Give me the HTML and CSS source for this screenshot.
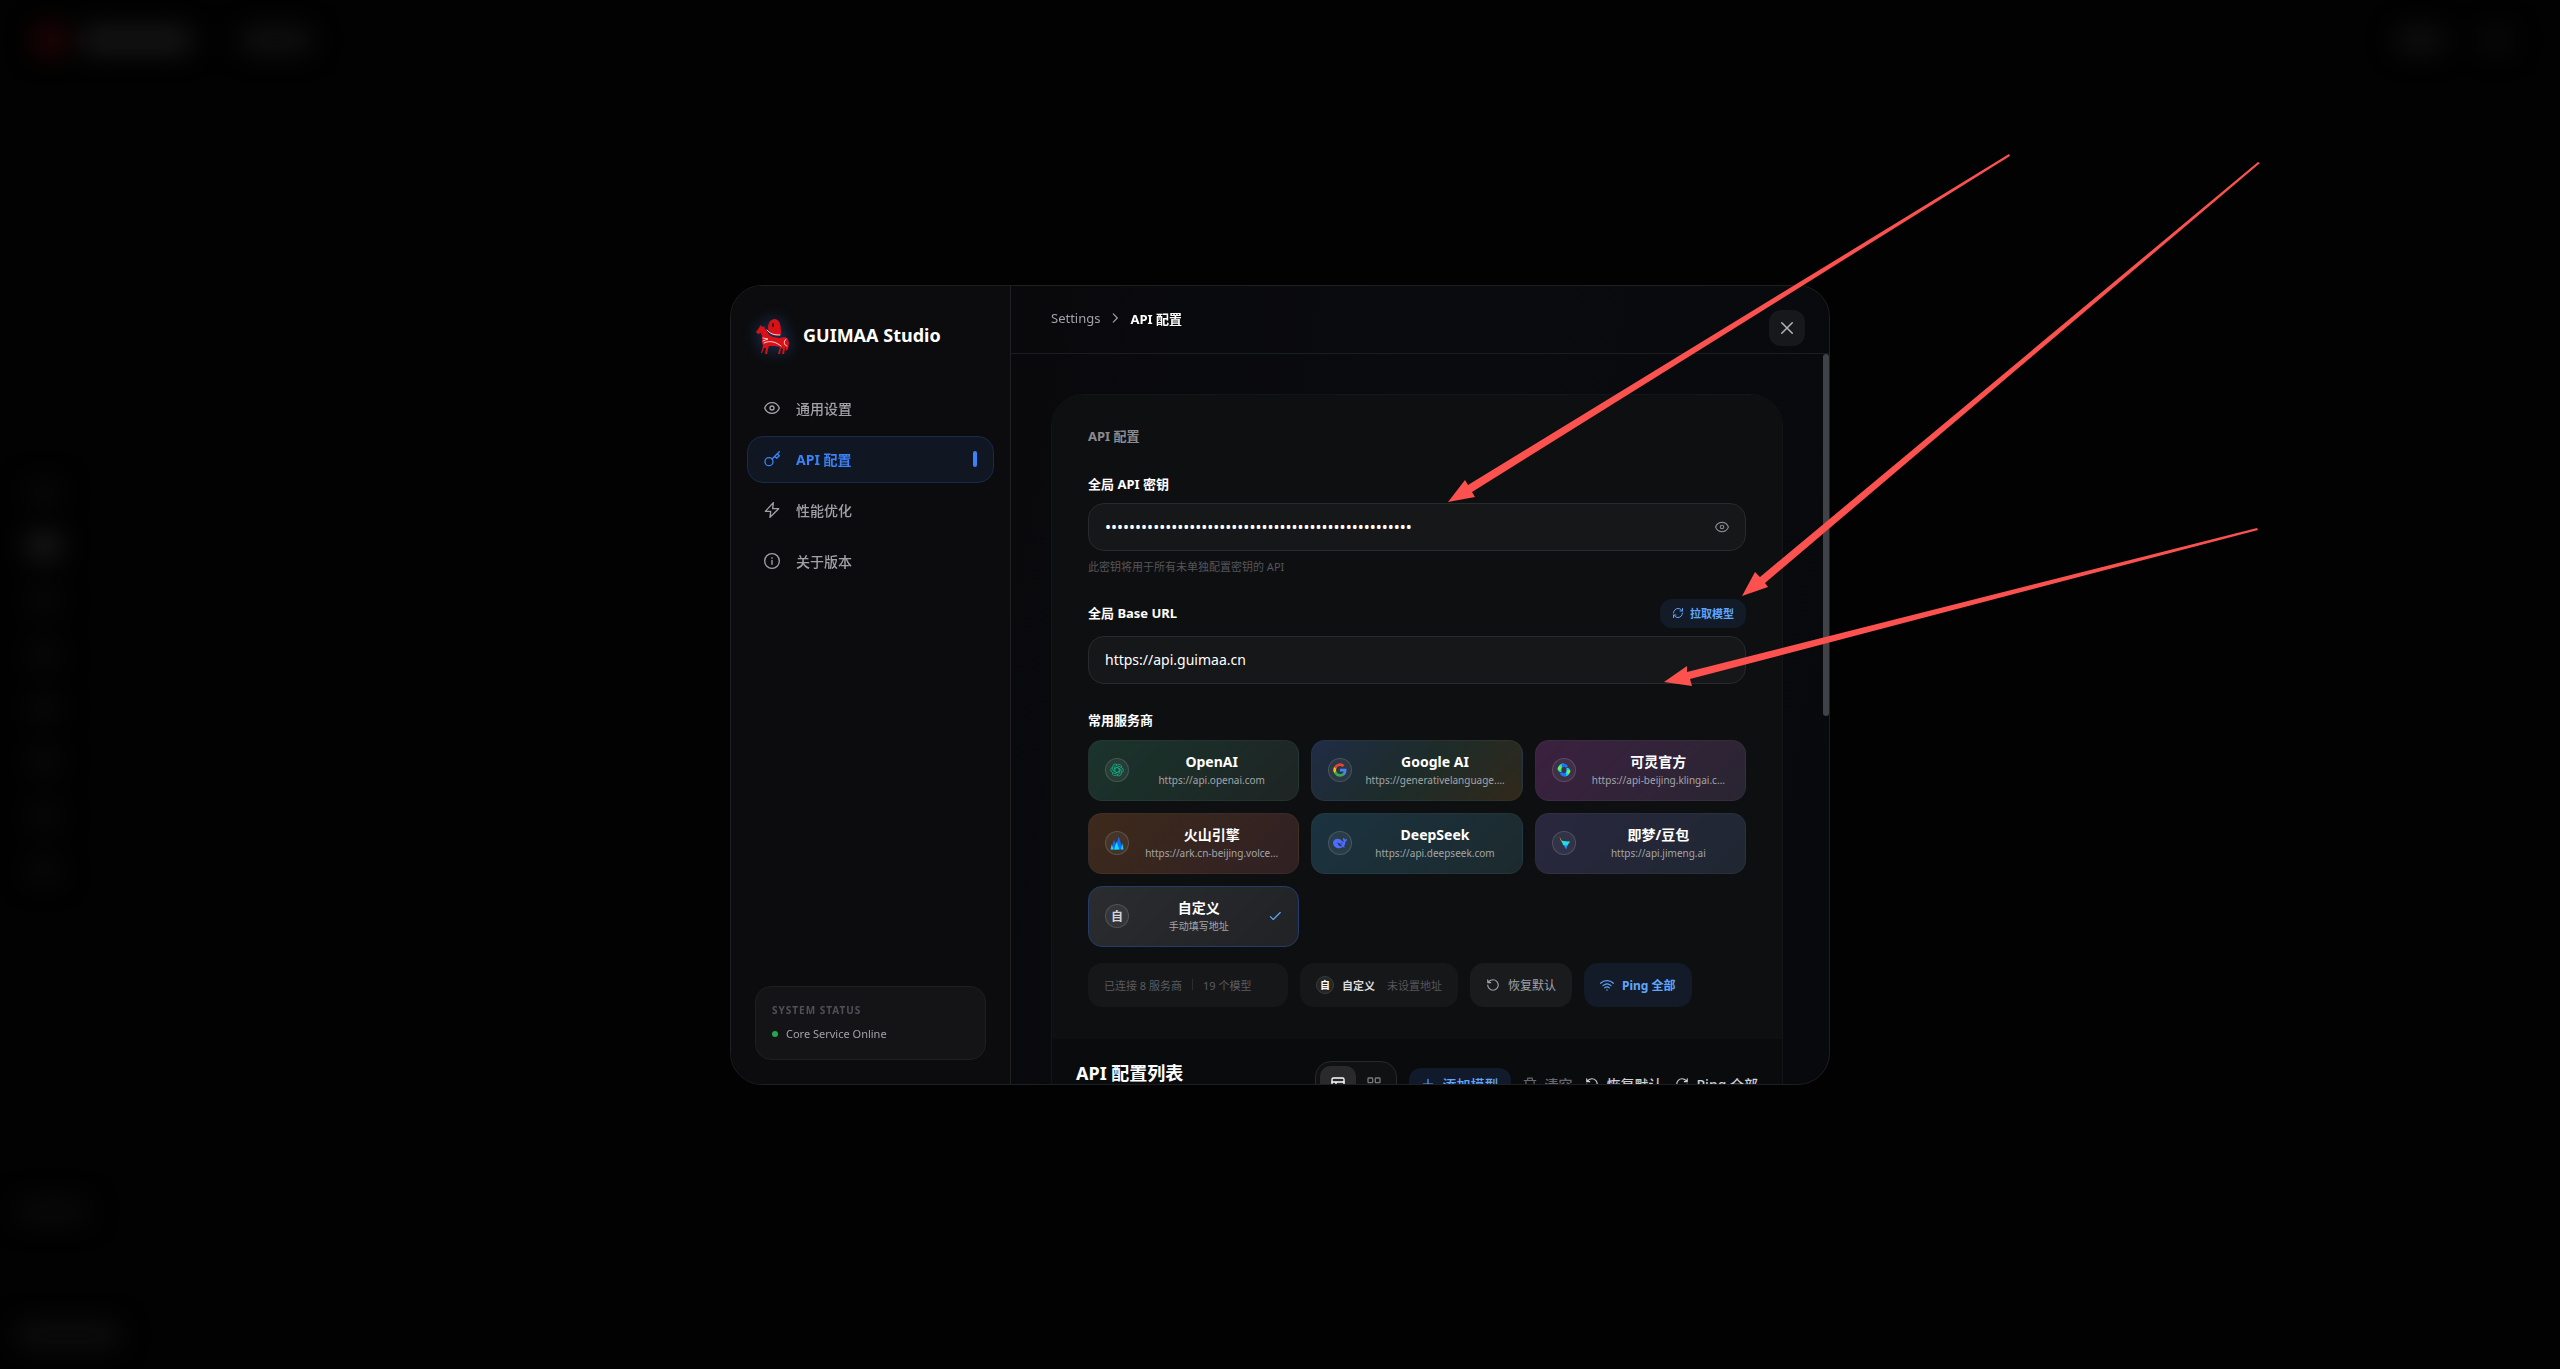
FILE: index.html
```html
<!DOCTYPE html>
<html lang="zh-CN">
<head>
  <meta charset="UTF-8" />
  <meta name="viewport" content="width=device-width, initial-scale=1.0"/>
  <title>GUIMAA Studio</title>
  <link rel="stylesheet" href="styles.css">
</head>
<body>
  <!-- Blurred app behind the dialog -->
  <div class="backdrop" aria-hidden="true">
    <div class="backdrop-top">
      <span class="ghost ghost-logo"></span>
      <span class="ghost ghost-brand"></span>
      <span class="ghost ghost-project"></span>
      <span class="ghost ghost-action"></span>
      <span class="ghost ghost-avatar"></span>
    </div>
    <div class="backdrop-rail">
      <span class="ghost"></span>
      <span class="ghost ghost-active"></span>
      <span class="ghost"></span>
      <span class="ghost"></span>
      <span class="ghost"></span>
      <span class="ghost"></span>
      <span class="ghost"></span>
      <span class="ghost"></span>
    </div>
    <div class="backdrop-bottom">
      <span class="ghost"></span>
      <span class="ghost ghost-wide"></span>
    </div>
  </div>

  <div class="dialog" role="dialog" aria-label="API 配置">
    <!-- Sidebar -->
    <aside class="sidebar">
      <div class="brand">
        <svg class="brand-logo" viewBox="0 0 36 40">
          <path fill="#d81118" d="M1 17 L4 13 L5 11 L6 10 L7 12 L9 11 L10 14 L12 16 L14 20 L18 22 L24 23 L30 22 L33 24 L34 28 L33 34 L31 36 L31 32 L30 34 L29 39 L27 39 L28 34 L26 33 L25 39 L23 39 L25 32 L20 31 L14 31 L13 34 L12 39 L10 39 L11 33 L9 33 L7 38 L6 38 L8 31 L7 27 L7 21 L6 18 L3 19 Z"/>
          <path fill="#d81118" d="M13 13 C13 6 17 4 20 4 C25 5 26 10 26 19 C24 21 21 21 18 20 C15 19 13 16 13 13 Z"/>
          <path fill="none" stroke="#f6d4d4" stroke-width="1" d="M12 15 C15 19 19 20 25 20 M8 23 L13 24 L8 26 M9 28 C15 25 21 27 26 31 M31 24 C28 27 29 30 32 31"/>
          <ellipse cx="18" cy="10" rx="1" ry="2" fill="#2a0707"/>
        </svg>
        <h1>GUIMAA Studio</h1>
      </div>
      <nav class="sidebar-nav">
        <a href="#general">
          <svg viewBox="0 0 24 24"><path d="M1 12C3 7 7 4 12 4s9 3 11 8c-2 5-6 8-11 8s-9-3-11-8Z"/><circle cx="12" cy="12" r="3"/></svg>
          通用设置
        </a>
        <a href="#api" class="active">
          <svg viewBox="0 0 24 24"><circle cx="7.500" cy="16" r="6"/><path d="m12 12 11-11M16 8l3 3 4-4-3-3"/></svg>
          API 配置
        </a>
        <a href="#performance">
          <svg viewBox="0 0 24 24"><path d="M14 1 2 14h8l-1 9L22 10h-9l1-9Z"/></svg>
          性能优化
        </a>
        <a href="#about">
          <svg viewBox="0 0 24 24"><circle cx="12" cy="12" r="11"/><path d="M12 11v6M12 7v1"/></svg>
          关于版本
        </a>
      </nav>
      <div class="system-status">
        <h2>SYSTEM STATUS</h2>
        <p><span class="status-dot"></span>Core Service Online</p>
      </div>
    </aside>

    <div class="panel">
      <header class="panel-header">
        <a href="#settings">Settings</a>
        <svg viewBox="0 0 24 24"><path d="m9 5 7 7-7 7"/></svg>
        <strong>API 配置</strong>
      </header>
      <button class="close-btn" aria-label="关闭">
        <svg viewBox="0 0 24 24"><path d="M5 5l14 14M19 5 5 19"/></svg>
      </button>

      <div class="panel-body">
        <div class="panel-scroll">
          <section class="card">
            <div class="card-main">
              <h3>API 配置</h3>

              <label class="field-label" for="apiKey">全局 API 密钥</label>
              <div class="input-box">
                <input type="password" id="apiKey" value="sk-000000000000000000000000000000000000000000000000">
                <button class="eye-btn" aria-label="显示密钥">
                  <svg viewBox="0 0 24 24"><path d="M1 12C3 7 7 4 12 4s9 3 11 8c-2 5-6 8-11 8s-9-3-11-8Z"/><circle cx="12" cy="12" r="3"/></svg>
                </button>
              </div>
              <p class="hint">此密钥将用于所有未单独配置密钥的 API</p>

              <div class="field-row">
                <label class="field-label" for="baseUrl">全局 Base URL</label>
                <button class="fetch-btn">
                  <svg viewBox="0 0 24 24"><path d="M3 12a9 9 0 0 1 9-9 10 10 0 0 1 7 3l2 2M21 3v5h-5M21 12a9 9 0 0 1-9 9 10 10 0 0 1-7-3l-2-2M3 21v-5h5"/></svg>
                  拉取模型
                </button>
              </div>
              <div class="input-box">
                <input type="text" id="baseUrl" value="https://api.guimaa.cn">
              </div>

              <h4 class="providers-title">常用服务商</h4>
              <div class="providers">
                <button class="provider openai">
                  <span class="provider-icon">
                    <svg viewBox="0 0 24 24"><g fill="none" stroke="#16a37f" stroke-width="1.500"><path d="M12 7.500 16 10v8l-5 3a4.500 4.500 0 0 1-7-4"/><path d="M12 7.500 16 10v8l-5 3a4.500 4.500 0 0 1-7-4" transform="rotate(60 12 12)"/><path d="M12 7.500 16 10v8l-5 3a4.500 4.500 0 0 1-7-4" transform="rotate(120 12 12)"/><path d="M12 7.500 16 10v8l-5 3a4.500 4.500 0 0 1-7-4" transform="rotate(180 12 12)"/><path d="M12 7.500 16 10v8l-5 3a4.500 4.500 0 0 1-7-4" transform="rotate(240 12 12)"/><path d="M12 7.500 16 10v8l-5 3a4.500 4.500 0 0 1-7-4" transform="rotate(300 12 12)"/></g></svg>
                  </span>
                  <span class="provider-text"><b>OpenAI</b><small>https://api.openai.com</small></span>
                </button>
                <button class="provider google">
                  <span class="provider-icon">
                    <svg viewBox="0 0 24 24"><path fill="#4285f4" d="M23 12.300c0-.8-.1-1.600-.2-2.300H12v4.500h6.200a5.300 5.300 0 0 1-2.300 3.500v2.900h3.700c2.100-2 3.400-4.900 3.400-8.600z"/><path fill="#34a853" d="M12 23.500c3.100 0 5.700-1 7.600-2.800l-3.700-2.900c-1 .7-2.300 1.100-3.900 1.100-3 0-5.500-2-6.400-4.700H1.800v3A11.500 11.500 0 0 0 12 23.500z"/><path fill="#fbbc05" d="M5.600 14.200a6.900 6.900 0 0 1 0-4.400v-3H1.800a11.500 11.500 0 0 0 0 10.400z"/><path fill="#ea4335" d="M12 5.100c1.700 0 3.200.6 4.400 1.700l3.300-3.300A11.500 11.500 0 0 0 1.800 6.800l3.800 3C6.500 7.100 9 5.100 12 5.100z"/></svg>
                  </span>
                  <span class="provider-text"><b>Google AI</b><small>https://generativelanguage.…</small></span>
                </button>
                <button class="provider kling">
                  <span class="provider-icon">
                    <svg viewBox="0 0 24 24"><path fill="#12e6b0" d="M1 12C2 5 5 1 11 1l4 2C9 5 7 9 8 15l-3 1z"/><path fill="#1877f2" d="M8 2c5-2 10 0 11 5l-4 1c-2-2-4-2-6 0z"/><path fill="#7cf53c" d="M1 9l3-4 3 2-1 5-4-1z"/><path fill="#12d3f0" d="M23 12c-1 7-4 11-10 11l-4-2c6-2 8-6 7-12l3-1z"/><path fill="#1877f2" d="M16 22c-5 2-10 0-11-5l4-1c2 2 4 2 6 0z"/><path fill="#7cf53c" d="M23 15l-3 4-3-2 1-5 4 1z"/></svg>
                  </span>
                  <span class="provider-text"><b>可灵官方</b><small>https://api-beijing.klingai.c…</small></span>
                </button>
                <button class="provider volcano">
                  <span class="provider-icon">
                    <svg viewBox="0 0 24 24"><path fill="#0c6cff" d="M15 1 22 23H8z"/><path fill="#0c6cff" d="M7 6l5 17H2z"/><path fill="#12e0e8" d="M11 10l5 13H7zM3 14l3 9H1zM21 12l2 11h-4z"/></svg>
                  </span>
                  <span class="provider-text"><b>火山引擎</b><small>https://ark.cn-beijing.volce…</small></span>
                </button>
                <button class="provider deepseek">
                  <span class="provider-icon">
                    <svg viewBox="0 0 24 24"><path fill="#4d6bfe" d="M24 5c-1 0-2 1-3 1-2-1-2-3-3-3l-1 2c0 2 1 3 2 4l-1 1C15 9 13 5 10 5 5 4 1 6 0 11c0 6 5 10 11 10 3 0 4-1 6-2l3 1-1-3c2-2 2-4 2-7 2-1 3-3 3-5z"/><path fill="#26383f" d="M7 11c4 0 7 4 9 7-4 0-7-2-9-7zM13 12c1-1 3 0 3 2l-2-1z"/></svg>
                  </span>
                  <span class="provider-text"><b>DeepSeek</b><small>https://api.deepseek.com</small></span>
                </button>
                <button class="provider jimeng">
                  <span class="provider-icon">
                    <svg viewBox="0 0 24 24"><path fill="#f6b53c" d="M4 0l4 9-2-2z"/><path fill="#e8fbff" d="M6 6c5 5 10 4 16 4l-7 5z"/><path fill="#19e3e6" d="M7 8l15 2-5 8-6-2z"/><path fill="#1c8ff5" d="M12 17l6-2-2 8z"/></svg>
                  </span>
                  <span class="provider-text"><b>即梦/豆包</b><small>https://api.jimeng.ai</small></span>
                </button>
                <button class="provider custom selected">
                  <span class="provider-icon">自</span>
                  <span class="provider-text"><b>自定义</b><small>手动填写地址</small></span>
                  <svg class="check" viewBox="0 0 24 24"><path d="m4 13 5 5L21 6"/></svg>
                </button>
              </div>

              <div class="summary">
                <div class="pill pill-stats">
                  <span>已连接 8 服务商</span>
                  <i class="divider"></i>
                  <span>19 个模型</span>
                </div>
                <div class="pill pill-current">
                  <span class="mini-icon">自</span>
                  <b>自定义</b>
                  <span class="muted">未设置地址</span>
                </div>
                <button class="pill pill-reset">
                  <svg viewBox="0 0 24 24"><path d="M3 12a9 9 0 1 0 9-9 10 10 0 0 0-7 3L3 8M3 3v5h5"/></svg>
                  恢复默认
                </button>
                <button class="pill pill-ping">
                  <svg viewBox="0 0 24 24"><path d="M1 9a16 16 0 0 1 22 0M5 13a11 11 0 0 1 14 0M8 17a6 6 0 0 1 8 0M12 20v1"/></svg>
                  Ping 全部
                </button>
              </div>
            </div>

            <div class="card-list">
              <h2>API 配置列表</h2>
              <div class="toolbar">
                <div class="view-toggle">
                  <button class="active" aria-label="表格视图">
                    <svg viewBox="0 0 24 24"><rect x="3" y="3" width="18" height="18" rx="2"/><path d="M3 9h18M9 9v12M9 15h12"/></svg>
                  </button>
                  <button aria-label="网格视图">
                    <svg viewBox="0 0 24 24"><rect x="3" y="3" width="7" height="7" rx="1"/><rect x="14" y="3" width="7" height="7" rx="1"/><rect x="3" y="14" width="7" height="7" rx="1"/><rect x="14" y="14" width="7" height="7" rx="1"/></svg>
                  </button>
                </div>
                <button class="tool add">
                  <svg viewBox="0 0 24 24"><path d="M12 4v16M4 12h16"/></svg>
                  添加模型
                </button>
                <button class="tool clear">
                  <svg viewBox="0 0 24 24"><path d="M2 6h20M19 6v14a2 2 0 0 1-2 2H7a2 2 0 0 1-2-2V6M8 6V2h8v4"/></svg>
                  清空
                </button>
                <button class="tool">
                  <svg viewBox="0 0 24 24"><path d="M3 12a9 9 0 1 0 9-9 10 10 0 0 0-7 3L3 8M3 3v5h5"/></svg>
                  恢复默认
                </button>
                <button class="tool">
                  <svg viewBox="0 0 24 24"><path d="M21 12a9 9 0 1 1-9-9 10 10 0 0 1 7 3l2 2M21 3v5h-5"/></svg>
                  Ping 全部
                </button>
              </div>
            </div>
          </section>
        </div>
        <div class="scroll-track"><div class="scroll-thumb"></div></div>
      </div>
    </div>
  </div>

  <!-- Pointer arrows drawn over the dialog -->
  <svg class="arrows" viewBox="0 0 2560 1369" aria-hidden="true">
    <path d="M2009 154 L2010 156 L1472 492 L1475 497 L1448 502 L1465 480 L1468 485 Z"/>
    <path d="M2258 162 L2260 163 L1765 583 L1768 587 L1742 596 L1755 572 L1760 577 Z"/>
    <path d="M2257 528 L2258 530 L1690 679 L1692 686 L1664 682 L1687 666 L1687 672 Z"/>
  </svg>
</body>
</html>
```

FILE: styles.css
```css
* {
  box-sizing: border-box;
}

body {
  margin: 0;
  min-height: 100vh;
  display: flex;
  align-items: center;
  justify-content: center;
  background-color: #020202;
  color: #fff;
  font-family: "Noto Sans", "Noto Sans CJK SC", sans-serif;
  font-size: 14px;
  overflow: hidden;
}

h1, h2, h3, h4, p {
  margin: 0;
}

a {
  color: inherit;
  text-decoration: none;
}

button, input {
  font: inherit;
  color: inherit;
  border: none;
  background: none;
  padding: 0;
  margin: 0;
}

button {
  cursor: pointer;
}

svg {
  flex: none;
  fill: none;
  stroke: currentColor;
  stroke-width: 2;
  stroke-linecap: round;
  stroke-linejoin: round;
}

/* Blurred background app */
.backdrop {
  position: fixed;
  inset: 0;
  display: flex;
  flex-direction: column;
  filter: blur(14px);
}

.ghost {
  display: block;
  width: 32px;
  height: 20px;
  border-radius: 8px;
  background-color: #0b0b0b;
}

.backdrop-top {
  display: flex;
  align-items: center;
  height: 80px;
  padding: 0 48px 0 36px;
}

.ghost-logo {
  width: 28px;
  height: 28px;
  background-color: #2c0304;
}

.ghost-brand {
  width: 112px;
  margin-left: 16px;
  background-color: #1d1d1d;
}

.ghost-project {
  width: 72px;
  margin-left: 48px;
  background-color: #141414;
}

.ghost-action {
  width: 48px;
  margin-left: auto;
  background-color: #131313;
}

.ghost-avatar {
  width: 32px;
  margin-left: 36px;
  background-color: #0c0c0c;
}

.backdrop-rail {
  display: flex;
  flex: 1;
  flex-direction: column;
  justify-content: center;
  gap: 34px;
  padding: 80px 0 0 28px;
}

.ghost-active {
  background-color: #242424;
}

.backdrop-bottom {
  display: flex;
  flex-direction: column;
  gap: 104px;
  padding: 0 0 24px 16px;
}

.backdrop-bottom .ghost {
  width: 72px;
}

.backdrop-bottom .ghost-wide {
  width: 104px;
  background-color: #101010;
}

/* Dialog */
.dialog {
  position: relative;
  display: flex;
  width: 1100px;
  max-width: 94vw;
  height: 800px;
  max-height: 94vh;
  border: 1px solid #1f1f21;
  border-radius: 32px;
  background: linear-gradient(100deg, #08080a, #0a0b0f 60%, #08090c);
  overflow: hidden;
}

/* Sidebar */
.sidebar {
  display: flex;
  flex: none;
  flex-direction: column;
  width: 280px;
  border-right: 1px solid #202022;
  background-color: #0c0c0e;
}

.brand {
  display: flex;
  align-items: center;
  gap: 12px;
  padding: 29px 24px 30px;
}

.brand-logo {
  width: 36px;
  height: 40px;
  stroke: none;
  filter: drop-shadow(0 0 8px rgba(59, 130, 246, 0.4));
}

.brand h1 {
  font-size: 18px;
  line-height: 24px;
  white-space: nowrap;
}

.sidebar-nav {
  display: flex;
  flex-direction: column;
  gap: 4px;
  padding: 0 16px;
}

.sidebar-nav a {
  display: flex;
  align-items: center;
  gap: 16px;
  height: 47px;
  padding: 0 16px;
  border: 1px solid transparent;
  border-radius: 16px;
  color: #a1a1a8;
  font-weight: 500;
}

.sidebar-nav svg {
  width: 16px;
  height: 16px;
}

.sidebar-nav a.active {
  border-color: #182b4d;
  background-color: #101723;
  color: #3b82f6;
  font-weight: 700;
}

.sidebar-nav a.active::after {
  content: "";
  width: 4px;
  height: 16px;
  margin-left: auto;
  border-radius: 2px;
  background-color: #3b82f6;
}

.system-status {
  margin: auto 24px 24px;
  padding: 13px 16px 15px;
  border: 1px solid #1f1f22;
  border-radius: 16px;
  background-color: #141416;
}

.system-status h2 {
  color: #505057;
  font-size: 10px;
  line-height: 20px;
  letter-spacing: 1px;
}

.system-status p {
  display: flex;
  align-items: center;
  gap: 8px;
  margin-top: 4px;
  color: #a1a1a8;
  font-size: 11px;
  line-height: 20px;
}

.status-dot {
  width: 6px;
  height: 6px;
  border-radius: 50%;
  background-color: #22a853;
}

/* Right panel */
.panel {
  display: flex;
  flex: 1;
  flex-direction: column;
  min-width: 0;
}

.panel-header {
  display: flex;
  flex: none;
  align-items: center;
  gap: 8px;
  height: 68px;
  padding: 0 40px 2px;
  border-bottom: 1px solid #1c1d20;
  font-size: 13px;
}

.panel-header a {
  color: #a1a1a8;
}

.panel-header svg {
  width: 14px;
  height: 14px;
  color: #a1a1a8;
}

.close-btn {
  position: absolute;
  top: 24px;
  right: 24px;
  display: flex;
  align-items: center;
  justify-content: center;
  width: 36px;
  height: 36px;
  border-radius: 12px;
  background-color: #17181b;
  color: #b4b4ba;
}

.close-btn svg {
  width: 18px;
  height: 18px;
}

.panel-body {
  display: flex;
  flex: 1;
  min-height: 0;
}

.panel-scroll {
  flex: 1;
  min-width: 0;
  padding: 40px 40px 0;
  overflow: hidden;
}

.scroll-track {
  width: 6px;
}

.scroll-thumb {
  height: 362px;
  border-radius: 3px;
  background-color: #414247;
}

/* API card */
.card {
  min-height: 1000px;
  border: 1px solid #141518;
  border-radius: 32px;
  overflow: hidden;
}

.card-main {
  padding: 31px 36px 32px;
  background-color: #0e0f11;
}

.card-main h3 {
  color: #8b8b8f;
  font-size: 13px;
  line-height: 20px;
}

.field-label {
  display: block;
  font-size: 13px;
  font-weight: 700;
  line-height: 20px;
}

.card-main h3 + .field-label {
  margin: 28px 0 9px;
}

.input-box {
  display: flex;
  align-items: center;
  height: 48px;
  padding: 0 16px;
  border: 1px solid #292a2d;
  border-radius: 16px;
  background-color: #161719;
}

.input-box input {
  flex: 1;
  min-width: 0;
  outline: none;
}

.input-box input[type="password"] {
  font-size: 16px;
}

.eye-btn {
  display: flex;
  color: #85858c;
}

.eye-btn svg {
  width: 14px;
  height: 14px;
}

.hint {
  margin-top: 6px;
  color: #55555b;
  font-size: 11px;
  line-height: 20px;
}

.field-row {
  display: flex;
  align-items: center;
  justify-content: space-between;
  margin: 22px 0 8px;
}

.fetch-btn {
  display: flex;
  align-items: center;
  gap: 6px;
  height: 29px;
  padding: 0 12px;
  border-radius: 12px;
  background-color: #131a28;
  color: #60a5fa;
  font-size: 11px;
  font-weight: 700;
}

.fetch-btn svg {
  width: 12px;
  height: 12px;
}

.providers-title {
  margin: 26px 0 10px;
  font-size: 13px;
  line-height: 20px;
}

.providers {
  display: grid;
  grid-template-columns: repeat(3, minmax(0, 1fr));
  gap: 12px;
}

.provider {
  display: flex;
  align-items: center;
  gap: 12px;
  height: 61px;
  padding: 0 16px;
  border: 1px solid rgba(255, 255, 255, 0.04);
  border-radius: 14px;
}

.provider-icon {
  display: flex;
  flex: none;
  align-items: center;
  justify-content: center;
  width: 24px;
  height: 24px;
  border: 1px solid rgba(255, 255, 255, 0.14);
  border-radius: 50%;
  background-color: rgba(255, 255, 255, 0.06);
  color: #d6d6d8;
  font-size: 12px;
  font-weight: 700;
}

.provider-icon svg {
  width: 14px;
  height: 14px;
  stroke: none;
}

.provider-text {
  display: flex;
  flex: 1;
  flex-direction: column;
  min-width: 0;
}

.provider-text b {
  line-height: 20px;
}

.provider-text small {
  color: #a3a5a8;
  font-size: 10px;
  line-height: 16px;
  white-space: nowrap;
}

.openai { background: linear-gradient(135deg, #1a342c, #1e2423); }
.google { background: linear-gradient(135deg, #202c46, #1d2c29 50%, #31281b); }
.kling { background: linear-gradient(135deg, #3b2140, #292531); }
.volcano { background: linear-gradient(135deg, #3e2a1b, #2f2024); }
.deepseek { background: linear-gradient(135deg, #1b3340, #1c2a2d); }
.jimeng { background: linear-gradient(135deg, #29273f, #1f2731); }
.custom { background: linear-gradient(135deg, #2b2c2f, #212225); }

.provider.selected {
  border-color: #223c6c;
}

.check {
  width: 14px;
  height: 14px;
  color: #60a5fa;
}

.summary {
  display: flex;
  gap: 12px;
  margin-top: 16px;
}

.pill {
  display: flex;
  align-items: center;
  gap: 8px;
  height: 44px;
  padding: 0 16px;
  border-radius: 14px;
  background-color: #161719;
  font-size: 11px;
  white-space: nowrap;
}

.pill svg {
  width: 14px;
  height: 14px;
}

.pill-stats {
  gap: 10px;
  width: 200px;
  color: #5b5b61;
}

.divider {
  width: 1px;
  height: 11px;
  background-color: #2c2c30;
}

.mini-icon {
  display: flex;
  align-items: center;
  justify-content: center;
  width: 18px;
  height: 18px;
  border: 1px solid #3a3b3d;
  border-radius: 50%;
  background-color: #242527;
  font-size: 10px;
  font-weight: 700;
}

.pill-current b {
  color: #dcdcde;
}

.pill-current .muted {
  margin-left: 4px;
  color: #55555b;
}

.pill-reset {
  background-color: #1a1b1d;
  color: #a1a1a8;
  font-size: 12px;
}

.pill-ping {
  background-color: #131a28;
  color: #60a5fa;
  font-size: 12px;
  font-weight: 700;
}

/* Config list */
.card-list {
  display: flex;
  align-items: flex-start;
  justify-content: space-between;
  padding: 22px 24px;
  background-color: #0a0b0d;
}

.card-list h2 {
  font-size: 18px;
  line-height: 24px;
}

.toolbar {
  display: flex;
  align-items: center;
  gap: 12px;
}

.view-toggle {
  display: flex;
  height: 46px;
  padding: 4px;
  border: 1px solid #29292c;
  border-radius: 16px;
  background-color: #101113;
}

.view-toggle button {
  display: flex;
  align-items: center;
  justify-content: center;
  width: 36px;
  border-radius: 10px;
  color: #77777d;
}

.view-toggle button.active {
  background-color: #2a2a2c;
  color: #fff;
}

.view-toggle svg {
  width: 16px;
  height: 16px;
}

.tool {
  display: flex;
  align-items: center;
  gap: 8px;
  color: #d0d0d4;
  font-weight: 500;
  white-space: nowrap;
}

.tool svg {
  width: 14px;
  height: 14px;
}

.tool.add {
  height: 32px;
  padding: 0 12px;
  border-radius: 12px;
  background-color: #111a2a;
  color: #60a5fa;
}

.tool.clear {
  color: #67676d;
}

/* Arrows */
.arrows {
  position: absolute;
  top: 0;
  left: 0;
  width: 100%;
  pointer-events: none;
}

.arrows path {
  fill: #fb5250;
  stroke: none;
}
```
